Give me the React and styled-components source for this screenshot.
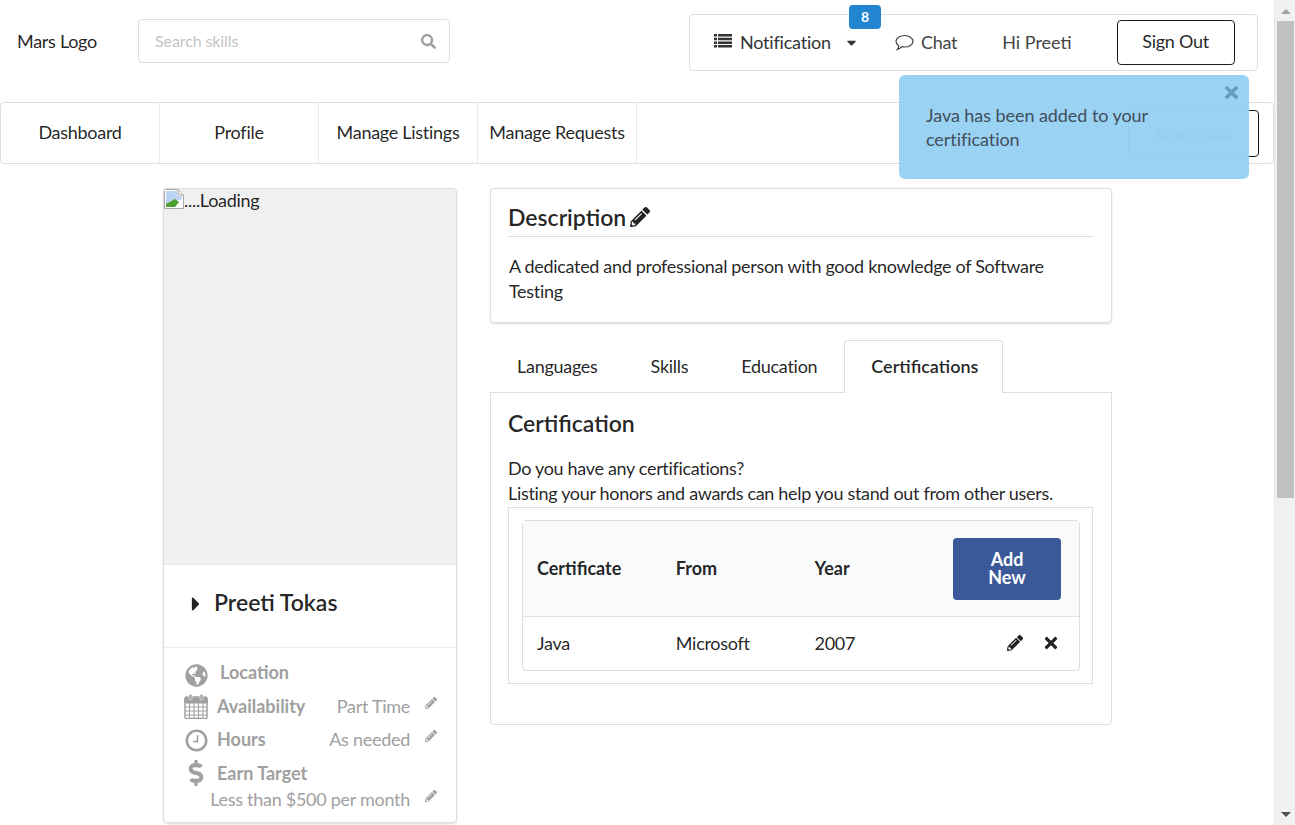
import React from 'react';
import styled, {createGlobalStyle} from 'styled-components';
import {FaCaretDown, FaCaretRight, FaSearch, FaTimes, FaPencilAlt, FaGlobeAmericas, FaDollarSign} from 'react-icons/fa';

const GlobalStyle = createGlobalStyle`
    html, body {
        margin: 0;
        height: 825px;
        overflow: hidden;
        background: #fff;
    }
    body {
        font-family: "Lato", "Liberation Sans", sans-serif;
        font-size: 18px;
        letter-spacing: -0.28px;
        color: rgba(0, 0, 0, 0.87);
    }
    * {
        box-sizing: border-box;
    }
`;

const BrokenImage = () => (
    <svg width="20" height="20" viewBox="0 0 20 20">
        <path d="M0.5 0.5H14L19.500 6V19.500H0.5Z" fill="#fff" stroke="#a8a8a8"/>
        <path d="M14 0.5V6H19.500" fill="#e8e8e8" stroke="#a8a8a8"/>
        <path d="M2 2H13V7H18V10L2 15Z" fill="#bcd4f4"/>
        <path d="M2 18V15L11 10L15 13L11 18Z" fill="#4ea12f"/>
    </svg>
);

const ListIcon = () => (
    <ListGlyph width="18" height="14" viewBox="0 0 18 14" fill="#333">
        <path d="M0 0H3V2.500H0ZM4 0H18V2.500H4ZM0 3.700H3V6.200H0ZM4 3.700H18V6.200H4ZM0 7.400H3V9.900H0ZM4 7.400H18V9.900H4ZM0 11.100H3V13.600H0ZM4 11.100H18V13.600H4Z"/>
    </ListGlyph>
);

const ChatIcon = () => (
    <ChatGlyph width="19" height="17" viewBox="0 0 19 17" fill="none" stroke="#444" strokeWidth="1.2">
        <path d="M9.500 1.500C14 1.500 18 4 18 7.300C18 10.600 14 13 9.500 13C8.500 13 7.500 12.900 6.700 12.700C5.700 14 3.800 15.200 2.300 15.500C3.300 14.300 3.800 13 3.700 11.700C2 10.700 1 9.100 1 7.300C1 4 5 1.500 9.500 1.500Z"/>
    </ChatGlyph>
);

const CalendarIcon = () => (
    <svg width="24" height="26" viewBox="0 0 24 26" fill="none" stroke="#a0a0a0">
        <path d="M1 5.500C1 4.500 1.700 4 2.500 4H21.500C22.300 4 23 4.500 23 5.500V24C23 24.800 22.300 25.500 21.500 25.500H2.500C1.700 25.500 1 24.800 1 24Z" strokeWidth="1.5"/>
        <path d="M1 5H23V10H1Z" fill="#a0a0a0"/>
        <path d="M1 14H23M1 18H23M1 22H23M5.500 10V25M10 10V25M14.500 10V25M19 10V25" strokeWidth="1"/>
        <rect x="5" y="1" width="3" height="6" rx="1.500" fill="#a0a0a0" stroke="#fff" strokeWidth="0.6"/>
        <rect x="16" y="1" width="3" height="6" rx="1.500" fill="#a0a0a0" stroke="#fff" strokeWidth="0.6"/>
    </svg>
);

const ClockIcon = () => (
    <ClockGlyph width="23" height="23" viewBox="0 0 23 23" fill="none" stroke="#a0a0a0">
        <circle cx="11.500" cy="11.500" r="9.700" strokeWidth="2.600"/>
        <path d="M12.500 6V12.500H8" strokeWidth="1.600"/>
    </ClockGlyph>
);

const App = () => {
    return (
        <Shell>
            <GlobalStyle/>
            <Page>
                <TopBar>
                    <Logo>Mars Logo</Logo>
                    <SearchBox>
                        <SearchPlaceholder>Search skills</SearchPlaceholder>
                        <SearchIcon/>
                    </SearchBox>
                    <UserMenu>
                        <NotificationItem>
                            <ListIcon/>
                            Notification
                            <DownCaret/>
                            <Badge>8</Badge>
                        </NotificationItem>
                        <ChatItem><ChatIcon/>Chat</ChatItem>
                        <GreetingItem>Hi Preeti</GreetingItem>
                        <SignOutButton>Sign Out</SignOutButton>
                    </UserMenu>
                </TopBar>

                <NavBar>
                    <NavItem>Dashboard</NavItem>
                    <NavItem>Profile</NavItem>
                    <NavItem>Manage Listings</NavItem>
                    <NavItem>Manage Requests</NavItem>
                    <ShareSkillButton>Share Skill</ShareSkillButton>
                </NavBar>

                <Toast>
                    <ToastClose/>
                    Java has been added to your certification
                </Toast>

                <Content>
                    <ProfileCard>
                        <ImageArea><BrokenImage/>....Loading</ImageArea>
                        <NameRow><FaCaretRight/><Name>Preeti Tokas</Name></NameRow>
                        <Details>
                            <LocationRow>
                                <GlobeIcon/>
                                <LocationLabel>Location</LocationLabel>
                            </LocationRow>
                            <DetailRow>
                                <CalendarIcon/>
                                <DetailLabel>Availability</DetailLabel>
                                <DetailValue>Part Time</DetailValue>
                                <EditIcon/>
                            </DetailRow>
                            <DetailRow>
                                <ClockIcon/>
                                <DetailLabel>Hours</DetailLabel>
                                <DetailValue>As needed</DetailValue>
                                <EditIcon/>
                            </DetailRow>
                            <DetailRow>
                                <DollarIcon/>
                                <DetailLabel>Earn Target</DetailLabel>
                            </DetailRow>
                            <TargetRow>
                                <DetailValue>Less than $500 per month</DetailValue>
                                <EditIcon/>
                            </TargetRow>
                        </Details>
                    </ProfileCard>

                    <MainColumn>
                        <DescriptionCard>
                            <DescriptionTitle>Description<FaPencilAlt/></DescriptionTitle>
                            <DescriptionText>
                                A dedicated and professional person with good knowledge of Software Testing
                            </DescriptionText>
                        </DescriptionCard>

                        <Tabs>
                            <Tab>Languages</Tab>
                            <Tab>Skills</Tab>
                            <Tab>Education</Tab>
                            <Tab $active>Certifications</Tab>
                        </Tabs>

                        <TabPanel>
                            <PanelTitle>Certification</PanelTitle>
                            <PanelIntro>
                                Do you have any certifications?<br/>
                                Listing your honors and awards can help you stand out from other users.
                            </PanelIntro>
                            <TableFrame>
                                <Table>
                                    <thead>
                                        <tr>
                                            <HeadCell $width={139}>Certificate</HeadCell>
                                            <HeadCell $width={139}>From</HeadCell>
                                            <HeadCell $width={139}>Year</HeadCell>
                                            <HeadCell><AddNewButton>Add New</AddNewButton></HeadCell>
                                        </tr>
                                    </thead>
                                    <tbody>
                                        <tr>
                                            <BodyCell>Java</BodyCell>
                                            <BodyCell>Microsoft</BodyCell>
                                            <BodyCell>2007</BodyCell>
                                            <BodyCell>
                                                <RowActions><RowEdit/><RowRemove/></RowActions>
                                            </BodyCell>
                                        </tr>
                                    </tbody>
                                </Table>
                            </TableFrame>
                        </TabPanel>
                    </MainColumn>
                </Content>
            </Page>

            <Scrollbar>
                <ArrowUp/>
                <Thumb/>
                <ArrowDown/>
            </Scrollbar>
        </Shell>
    );
};

export default App;

const Shell = styled.div`
    display: flex;
    height: 825px;
    overflow: hidden;
`;

const Page = styled.div`
    position: relative;
    flex: 1;
    min-width: 0;
    overflow: hidden;
`;

const TopBar = styled.header`
    display: flex;
    align-items: flex-start;
    height: 102px;
    padding: 14px 16px 0 17px;
`;

const Logo = styled.div`
    width: 121px;
    line-height: 55px;
`;

const SearchBox = styled.div`
    display: flex;
    align-items: center;
    justify-content: space-between;
    width: 312px;
    height: 44px;
    margin-top: 5px;
    padding: 0 13px 0 16px;
    border: 1px solid rgba(34, 36, 38, 0.15);
    border-radius: 4px;
`;

const SearchPlaceholder = styled.span`
    font-size: 16px;
    letter-spacing: -0.1px;
    color: #c4c4c4;
    margin-top: -2px;
`;

const SearchIcon = styled(FaSearch)`
    font-size: 15px;
    color: #9f9f9f;
`;

const UserMenu = styled.nav`
    position: relative;
    display: flex;
    align-items: center;
    width: 569px;
    height: 57px;
    margin-left: auto;
    padding-bottom: 1px;
    border: 1px solid rgba(34, 36, 38, 0.15);
    border-radius: 4px;
`;

const NotificationItem = styled.div`
    position: relative;
    display: flex;
    align-items: center;
    margin-left: 24px;
    letter-spacing: -0.2px;
    color: #333;
`;

const ListGlyph = styled.svg`
    margin-right: 8px;
    margin-top: -2px;
`;

const DownCaret = styled(FaCaretDown)`
    font-size: 15px;
    margin-left: 13px;
    color: #333;
`;

const Badge = styled.span`
    position: absolute;
    top: -26px;
    left: 135px;
    width: 32px;
    height: 24px;
    border-radius: 4px;
    background: #2185d0;
    color: #fff;
    font-size: 14px;
    font-weight: 700;
    line-height: 24px;
    text-align: center;
    letter-spacing: 0;
`;

const ChatItem = styled.div`
    display: flex;
    align-items: center;
    margin-left: 36px;
    color: #444;
`;

const ChatGlyph = styled.svg`
    margin-right: 7px;
`;

const GreetingItem = styled.div`
    margin-left: 45px;
    letter-spacing: 0;
    color: #444;
`;

const SignOutButton = styled.button`
    width: 118px;
    height: 45px;
    margin-left: 45px;
    padding-bottom: 3px;
    background: #fff;
    border: 1px solid #1b1c1d;
    border-radius: 4px;
    font: inherit;
    letter-spacing: inherit;
    color: rgba(0, 0, 0, 0.87);
`;

const NavBar = styled.nav`
    display: flex;
    align-items: center;
    width: 1274px;
    height: 62px;
    border: 1px solid rgba(34, 36, 38, 0.15);
    border-radius: 4px;
`;

const NavItem = styled.div`
    width: 159px;
    height: 100%;
    padding-bottom: 2px;
    display: flex;
    align-items: center;
    justify-content: center;
    border-right: 1px solid rgba(34, 36, 38, 0.1);
    white-space: nowrap;
`;

const ShareSkillButton = styled.button`
    width: 131px;
    height: 47px;
    margin-left: auto;
    margin-right: 14px;
    background: #fff;
    border: 1px solid #1b1c1d;
    border-radius: 4px;
    font: inherit;
    letter-spacing: inherit;
    color: rgba(0, 0, 0, 0.87);
`;

const Toast = styled.div`
    position: absolute;
    top: 75px;
    left: 899px;
    width: 350px;
    height: 104px;
    padding: 28px 50px 0 27px;
    border-radius: 6px;
    background: #97d2f2;
    opacity: 0.98;
    color: #3f4a5a;
    letter-spacing: -0.06px;
    line-height: 24px;
`;

const ToastClose = styled(FaTimes)`
    position: absolute;
    top: 8px;
    right: 8px;
    font-size: 19px;
    color: #5e9dbf;
`;

const Content = styled.main`
    display: flex;
    align-items: flex-start;
    gap: 33px;
    padding: 24px 0 0 163px;
`;

const ProfileCard = styled.aside`
    width: 294px;
    flex-shrink: 0;
    border: 1px solid rgba(34, 36, 38, 0.15);
    border-radius: 4px;
    box-shadow: 0 1px 2px rgba(34, 36, 38, 0.15);
    overflow: hidden;
`;

const ImageArea = styled.div`
    display: flex;
    align-items: flex-start;
    height: 376px;
    background: #f0f0f0;
    line-height: 23px;
    border-bottom: 1px solid #e8e8e8;

    svg {
        flex-shrink: 0;
    }
`;

const NameRow = styled.div`
    display: flex;
    align-items: center;
    height: 83px;
    padding-left: 21px;
    border-bottom: 1px solid #eee;

    svg {
        font-size: 22px;
        margin-right: 7px;
        margin-top: -5px;
    }
`;

const Name = styled.div`
    font-size: 23px;
    font-weight: 600;
    letter-spacing: 0;
    color: rgba(0, 0, 0, 0.87);
    margin-top: -8px;
`;

const Details = styled.div`
    display: flex;
    flex-direction: column;
    padding: 11px 19px 13px 20px;
`;

const DetailRow = styled.div`
    display: flex;
    align-items: center;
    height: 33.5px;
`;

const LocationRow = styled(DetailRow)`
    height: 30px;
    padding-left: 1px;
`;

const TargetRow = styled(DetailRow)`
    justify-content: flex-end;
    height: 19px;
`;

const DetailLabel = styled.span`
    margin-left: 9px;
    font-weight: 700;
    letter-spacing: 0;
    color: #a0a0a0;
`;

const LocationLabel = styled(DetailLabel)`
    margin-top: -5px;
`;

const DetailValue = styled.span`
    margin-left: auto;
    color: #a0a0a0;
`;

const EditIcon = styled(FaPencilAlt)`
    margin-left: 15px;
    margin-bottom: 6px;
    font-size: 12px;
    color: #a0a0a0;
`;

const GlobeIcon = styled(FaGlobeAmericas)`
    font-size: 23px;
    color: #a0a0a0;
    margin-right: 3px;
    margin-top: 2px;
`;

const ClockGlyph = styled.svg`
    margin-left: 1px;
    margin-top: 3px;
`;

const DollarIcon = styled(FaDollarSign)`
    font-size: 26px;
    color: #a0a0a0;
    width: 24px;
`;

const MainColumn = styled.section`
    width: 622px;
    flex-shrink: 0;
`;

const DescriptionCard = styled.div`
    height: 135px;
    padding: 14px 18px 0 18px;
    border: 1px solid rgba(34, 36, 38, 0.15);
    border-radius: 4px;
    box-shadow: 0 1px 2px rgba(34, 36, 38, 0.15);
`;

const DescriptionTitle = styled.h3`
    margin: 0;
    height: 34px;
    border-bottom: 1px solid rgba(34, 36, 38, 0.15);
    font-size: 23px;
    font-weight: 600;
    letter-spacing: 0;
    line-height: 28px;
    margin-left: -1px;

    svg {
        font-size: 20px;
        margin-left: 4px;
        margin-bottom: -1px;
    }
`;

const DescriptionText = styled.p`
    margin: 17px 0 0;
    letter-spacing: -0.32px;
    line-height: 25px;
`;

const Tabs = styled.div`
    display: flex;
    align-items: stretch;
    height: 52px;
    margin-top: 17px;
`;

const Tab = styled.div`
    display: flex;
    align-items: center;
    padding: ${({$active}) => ($active ? '0 24px 2px 26px' : '0 26px 2px')};
    margin-left: ${({$active}) => ($active ? '1px' : '0')};
    margin-bottom: ${({$active}) => ($active ? '-1px' : '0')};
    font-weight: ${({$active}) => ($active ? 600 : 400)};
    letter-spacing: ${({$active}) => ($active ? '0' : 'inherit')};
    background: #fff;
    position: relative;
    border: 1px solid ${({$active}) => ($active ? 'rgba(34, 36, 38, 0.15)' : 'transparent')};
    border-bottom: none;
    border-radius: 4px 4px 0 0;
    margin-right: ${({$active}) => ($active ? '0' : '-1px')};
`;

const TabPanel = styled.div`
    height: 333px;
    padding: 16px 18px 0 17px;
    border: 1px solid rgba(34, 36, 38, 0.15);
    border-radius: 0 0 4px 4px;
`;

const PanelTitle = styled.h3`
    margin: 0;
    font-size: 23px;
    font-weight: 600;
    letter-spacing: 0;
    line-height: 28px;
`;

const PanelIntro = styled.p`
    margin: 19px 0 0;
    letter-spacing: -0.32px;
    line-height: 25px;
`;

const TableFrame = styled.div`
    margin-top: 1px;
    padding: 12px 12px 12px 13px;
    border: 1px solid rgba(34, 36, 38, 0.15);
`;

const Table = styled.table`
    width: 100%;
    border-collapse: separate;
    border-spacing: 0;
    border: 1px solid rgba(34, 36, 38, 0.15);
    border-radius: 4px;
`;

const HeadCell = styled.th`
    width: ${({$width}) => ($width ? `${$width}px` : 'auto')};
    height: 96px;
    padding: 0 14px 2px;
    background: #f9fafb;
    border-bottom: 1px solid rgba(34, 36, 38, 0.1);
    font-weight: 700;
    letter-spacing: 0;
    text-align: left;
    color: rgba(0, 0, 0, 0.87);
`;

const BodyCell = styled.td`
    height: 53px;
    padding: 0 14px 2px;
`;

const AddNewButton = styled.button`
    display: block;
    width: 108px;
    height: 62px;
    margin: 3px 4px 0 auto;
    padding: 0 30px 2px;
    border: none;
    border-radius: 4px;
    background: #3b5998;
    color: #fff;
    font: inherit;
    font-weight: 700;
    line-height: 18px;
`;

const RowActions = styled.div`
    display: flex;
    justify-content: flex-end;
    align-items: center;
    gap: 19px;
    margin-right: 5px;
    color: #222;
`;

const RowEdit = styled(FaPencilAlt)`
    font-size: 16px;
`;

const RowRemove = styled(FaTimes)`
    font-size: 18px;
`;

const Scrollbar = styled.div`
    position: relative;
    display: flex;
    flex-direction: column;
    align-items: center;
    width: 21px;
    height: 825px;
    flex-shrink: 0;
    padding-left: 1px;
    background: #f1f1f1;
    border-left: 1px solid #e8e8e8;
`;

const ArrowUp = styled.div`
    width: 0;
    height: 0;
    margin: 9px 0 7px;
    border-left: 5px solid transparent;
    border-right: 5px solid transparent;
    border-bottom: 5px solid #a3a3a3;
`;

const Thumb = styled.div`
    width: 17px;
    height: 477px;
    background: #c1c1c1;
`;

const ArrowDown = styled.div`
    width: 0;
    height: 0;
    margin-top: auto;
    margin-bottom: 8px;
    border-left: 5px solid transparent;
    border-right: 5px solid transparent;
    border-top: 5px solid #505050;
`;
